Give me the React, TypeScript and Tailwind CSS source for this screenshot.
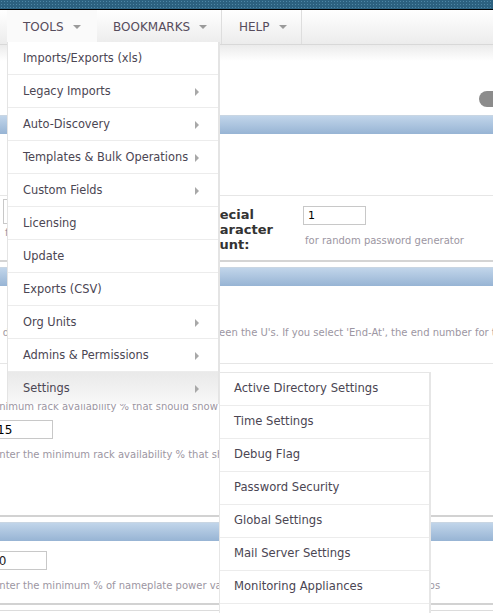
import React from 'react';

const toolsMenu = [
  { label: 'Imports/Exports (xls)', sub: false },
  { label: 'Legacy Imports', sub: true },
  { label: 'Auto-Discovery', sub: true },
  { label: 'Templates & Bulk Operations', sub: true },
  { label: 'Custom Fields', sub: true },
  { label: 'Licensing', sub: false },
  { label: 'Update', sub: false },
  { label: 'Exports (CSV)', sub: false },
  { label: 'Org Units', sub: true },
  { label: 'Admins & Permissions', sub: true },
  { label: 'Settings', sub: true, active: true },
];

const settingsMenu = [
  'Active Directory Settings',
  'Time Settings',
  'Debug Flag',
  'Password Security',
  'Global Settings',
  'Mail Server Settings',
  'Monitoring Appliances',
  'Notifications',
];

function Caret() {
  return <span className="ml-[9px] inline-block h-0 w-0 border-x-[4px] border-t-[4px] border-x-transparent border-t-[#9a9a9a]" />;
}

function Arrow() {
  return <span className="ml-auto inline-block h-0 w-0 shrink-0 border-y-[4px] border-l-[4px] border-y-transparent border-l-[#a8a8a8]" />;
}

function SectionBar() {
  return <div className="h-[19px] border-t border-[#c9d6e3] bg-[linear-gradient(#c1d5ea,#97b4d4)]" />;
}

export default function App() {
  return (
    <div className="relative h-[613px] w-[493px] overflow-hidden bg-white font-['DejaVu_Sans',sans-serif]">
      {/* Top strip */}
      <div className="h-[9px] bg-[#2c6180] bg-[image:radial-gradient(#4d86a6_1px,transparent_1px)] bg-[size:3px_3px]" />
      <div className="h-px bg-black" />

      {/* Main nav */}
      <nav className="flex h-[35px] border-b border-[#d8d8d8] bg-[linear-gradient(#ffffff,#ececec)] pl-[7px] text-[12px] uppercase text-[#564c5c]">
        <div className="flex w-[90px] items-center bg-[#fafafa] pl-[16px]">
          Tools
          <Caret />
        </div>
        <div className="flex w-[125px] items-center border-r border-[#dedede] pl-[16px]">
          Bookmarks
          <Caret />
        </div>
        <div className="flex w-[80px] items-center border-r border-[#dedede] pl-[17px]">
          Help
          <Caret />
        </div>
      </nav>

      {/* Settings page body */}
      <div className="flex h-[70px] justify-end bg-[linear-gradient(#ebebeb,#ffffff_16px)] pt-[46px]">
        <div className="mr-[-16px] h-[16px] w-[30px] rounded-full bg-[#8c8c8c]" />
      </div>
      <SectionBar />
      <div className="h-[62px] border-b border-[#e6e6e6]" />

      <div className="flex h-[66px] border-b-2 border-[#d4d4d4]">
        <div className="flex w-[201px] flex-col pl-[3px] pt-[3px]">
          <input readOnly defaultValue="8" className="block h-[25px] w-[150px] border border-[#c8c8c8] px-1 text-[11px] text-black outline-none" />
          <p className="mt-[1px] pl-[2px] text-[10px] text-[#9c96a2]">for minimum password length</p>
        </div>
        <div className="w-[102px] pt-[11px] text-[13px] font-bold leading-[15px] text-[#333]">
          Special Character Count:
        </div>
        <div className="flex flex-col pt-[10px]">
          <input readOnly defaultValue="1" className="block h-[19px] w-[63px] border border-[#c8c8c8] px-[4px] text-[11px] text-black outline-none" />
          <p className="mt-[8px] pl-[2px] text-[10px] text-[#9c96a2]">for random password generator</p>
        </div>
      </div>
      <div className="h-[5px]" />
      <SectionBar />

      <div className="h-[78px] border-b border-[#e6e6e6] pt-[39px]">
        <p className="ml-[-24px] whitespace-nowrap text-[10px] text-[#9c96a2]">
          t the direction of U numbering and spacing between the U's. If you select 'End-At', the end number for the rack
        </p>
      </div>

      <div className="h-[153px] border-b-2 border-[#d2d2d2] pt-[35px]">
        <p className="ml-[-63px] whitespace-nowrap text-[10px] text-[#9c96a2]">
          Enter the minimum rack availability % that should show as available
        </p>
        <input readOnly defaultValue="15" className="mt-[6px] ml-[-8px] block h-[19px] w-[61px] border border-[#c8c8c8] px-[4px] text-[12px] text-black outline-none" />
        <p className="mt-[8px] ml-[-7px] whitespace-nowrap text-[10px] text-[#9c96a2]">
          Enter the minimum rack availability % that should show as available
        </p>
      </div>
      <div className="h-[5px]" />
      <SectionBar />

      <div className="h-[64px] border-b-2 border-[#d2d2d2] pt-[10px]">
        <input readOnly defaultValue="80" className="ml-[-14px] block h-[19px] w-[61px] border border-[#c8c8c8] px-[4px] text-[12px] text-[#222] outline-none" />
        <p className="mt-[8px] ml-[-7px] whitespace-nowrap text-[10px] text-[#9c96a2]">
          Enter the minimum % of nameplate power value used when calculating peak power caps
        </p>
      </div>
      <div className="h-[6px] border-b border-[#dcdcdc]" />
      <div className="h-[4px]" />
      <div className="h-[2px] bg-[#2b2b24]" />

      {/* Tools dropdown */}
      <ul className="absolute left-[7px] top-[42px] w-[213px] border-l border-r-2 border-[#e4e4e4] bg-white text-[11.4px] text-[#4b4653]">
        {toolsMenu.map((item) => (
          <li
            key={item.label}
            className={
              item.active
                ? 'flex h-[32px] items-center bg-[linear-gradient(#e9e9e9,#f8f8f8)] pl-[15px] pr-[19px] pt-px'
                : 'flex h-[33px] items-center border-b border-[#ececec] pl-[15px] pr-[19px] pt-px'
            }
          >
            <span className="whitespace-nowrap">{item.label}</span>
            {item.sub && <Arrow />}
          </li>
        ))}
      </ul>

      {/* Settings submenu */}
      <ul className="absolute left-[219px] top-[372px] w-[212px] border-l border-r-2 border-t border-[#e6e6e6] bg-white text-[11.6px] text-[#4b4653]">
        {settingsMenu.map((label) => (
          <li key={label} className="flex h-[33px] items-center border-b border-[#ececec] pl-[14px]">
            {label}
          </li>
        ))}
      </ul>
    </div>
  );
}
